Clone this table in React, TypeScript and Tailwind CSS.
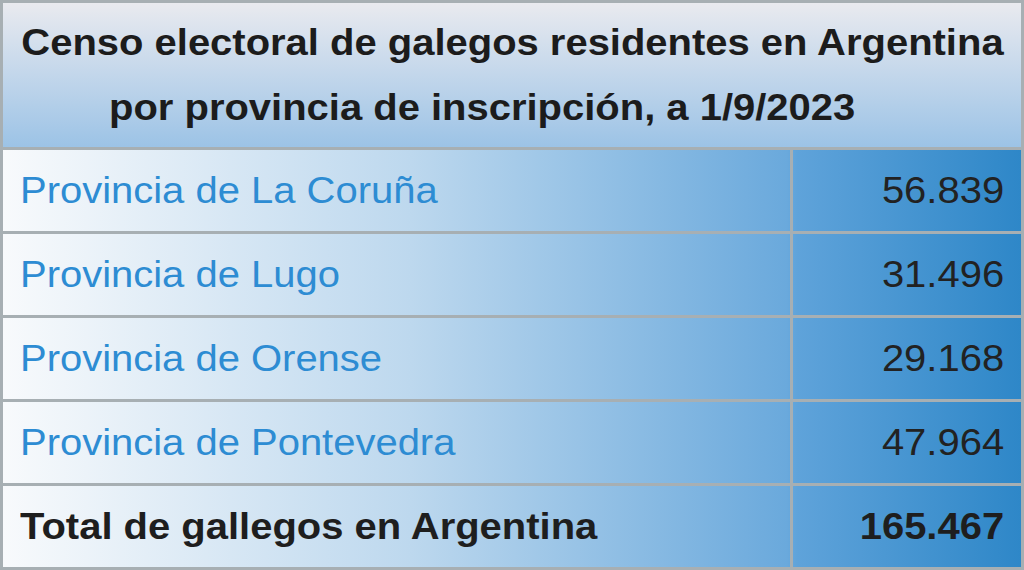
const rows = [
  { label: "Provincia de La Coruña", value: "56.839" },
  { label: "Provincia de Lugo", value: "31.496" },
  { label: "Provincia de Orense", value: "29.168" },
  { label: "Provincia de Pontevedra", value: "47.964" },
];

export default function App() {
  return (
    <div
      className="w-[1024px] h-[570px] overflow-hidden border-[3px] border-[#a7afb3] flex flex-col bg-[#a7afb3]"
      style={{ fontFamily: '"Liberation Sans", Arial, sans-serif' }}
    >
      <div className="h-[144px] shrink-0 bg-gradient-to-b from-[#e9eaef] to-[#9cc3e6] pt-[7px] text-center font-bold text-[36px] leading-[65px] text-[#1c1c1c]">
        <div>
          <span className="inline-block scale-x-[1.11]">Censo electoral de galegos residentes en Argentina</span>
        </div>
        <div className="pr-[60px]">
          <span className="inline-block scale-x-[1.11]">por provincia de inscripción, a 1/9/2023</span>
        </div>
      </div>

      <div className="flex-1 flex flex-col border-t-[3px] border-[#a7afb3] bg-[linear-gradient(to_right,#f8fafc_0%,#bdd8ee_40%,#6aa9dc_77%,#5fa3da_78%,#2e87c8_100%)]">
        {rows.map((row, i) => (
          <div
            key={row.label}
            className={`flex text-[36px] ${i > 0 ? "h-[84px] border-t-[3px] border-[#a7afb3]" : "h-[81px]"}`}
          >
            <div className="w-[787px] flex items-center pl-[17px] text-[#2d8cd3]">
              <span className="origin-left scale-x-[1.11]">{row.label}</span>
            </div>
            <div className="flex-1 flex items-center justify-end pr-[17px] border-l-[3px] border-[#a7afb3] text-[#222]">
              <span className="origin-right scale-x-[1.11]">{row.value}</span>
            </div>
          </div>
        ))}
        <div className="flex-1 flex text-[36px] font-bold border-t-[3px] border-[#a7afb3] text-[#1e1e1e]">
          <div className="w-[787px] flex items-center pl-[17px]">
            <span className="origin-left scale-x-[1.11]">Total de gallegos en Argentina</span>
          </div>
          <div className="flex-1 flex items-center justify-end pr-[17px] border-l-[3px] border-[#a7afb3]">
            <span className="origin-right scale-x-[1.11]">165.467</span>
          </div>
        </div>
      </div>
    </div>
  );
}
